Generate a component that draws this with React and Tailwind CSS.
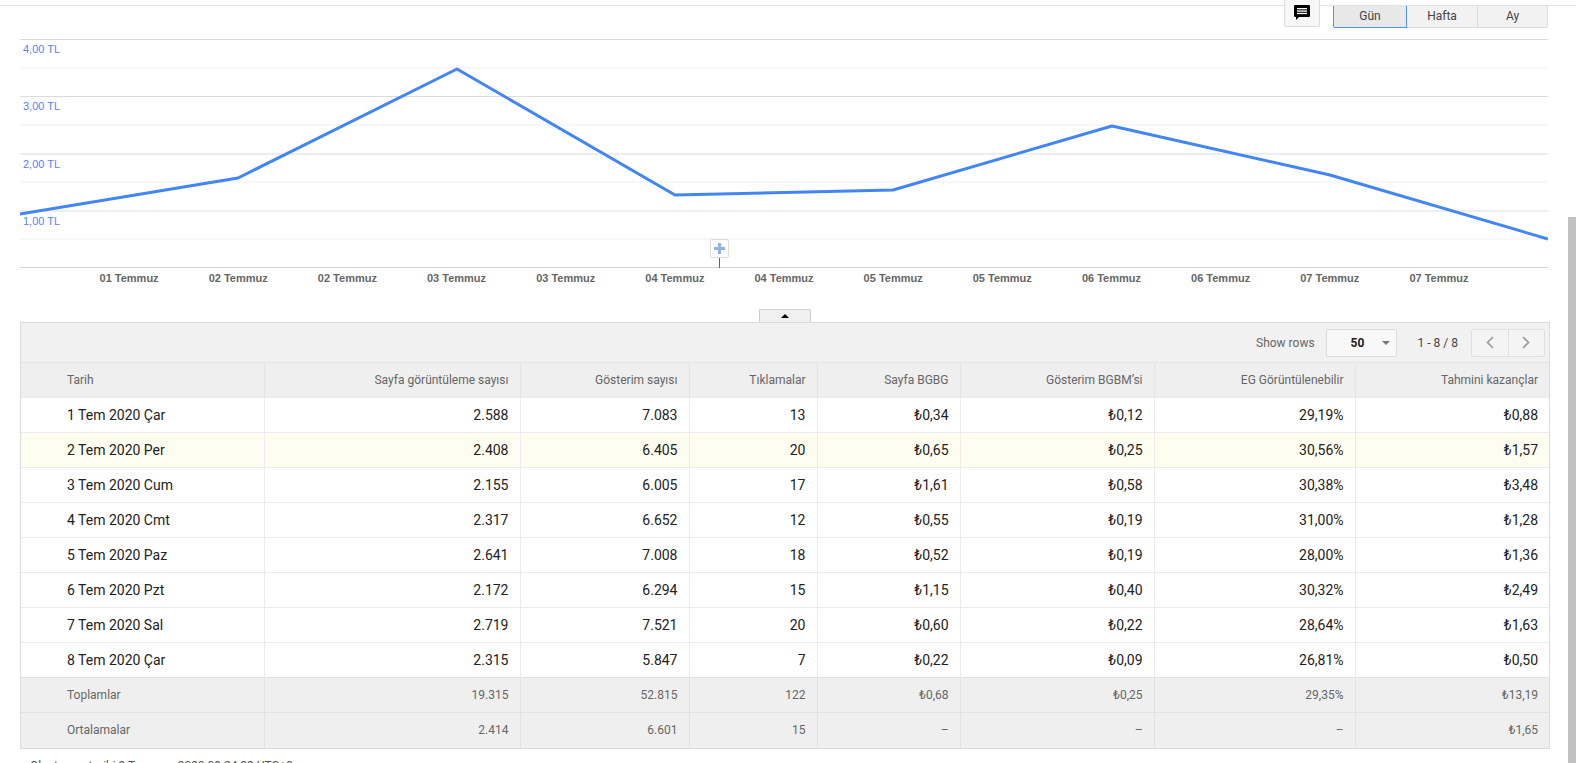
import React from 'react';

const points = [
  [0, 175], [218, 139], [437, 30], [655, 156], [873, 151], [1092, 87], [1310, 136], [1528, 200],
];

const xLabels = [
  '01 Temmuz', '02 Temmuz', '02 Temmuz', '03 Temmuz', '03 Temmuz', '04 Temmuz', '04 Temmuz',
  '05 Temmuz', '05 Temmuz', '06 Temmuz', '06 Temmuz', '07 Temmuz', '07 Temmuz',
];

const yLabels = [
  { t: '4,00 TL', top: 'top-[5px]' },
  { t: '3,00 TL', top: 'top-[62px]' },
  { t: '2,00 TL', top: 'top-[120px]' },
  { t: '1,00 TL', top: 'top-[177px]' },
];

const rows = [
  ['1 Tem 2020 Çar', '2.588', '7.083', '13', '₺0,34', '₺0,12', '29,19%', '₺0,88'],
  ['2 Tem 2020 Per', '2.408', '6.405', '20', '₺0,65', '₺0,25', '30,56%', '₺1,57'],
  ['3 Tem 2020 Cum', '2.155', '6.005', '17', '₺1,61', '₺0,58', '30,38%', '₺3,48'],
  ['4 Tem 2020 Cmt', '2.317', '6.652', '12', '₺0,55', '₺0,19', '31,00%', '₺1,28'],
  ['5 Tem 2020 Paz', '2.641', '7.008', '18', '₺0,52', '₺0,19', '28,00%', '₺1,36'],
  ['6 Tem 2020 Pzt', '2.172', '6.294', '15', '₺1,15', '₺0,40', '30,32%', '₺2,49'],
  ['7 Tem 2020 Sal', '2.719', '7.521', '20', '₺0,60', '₺0,22', '28,64%', '₺1,63'],
  ['8 Tem 2020 Çar', '2.315', '5.847', '7', '₺0,22', '₺0,09', '26,81%', '₺0,50'],
];

const totals = [
  ['Toplamlar', '19.315', '52.815', '122', '₺0,68', '₺0,25', '29,35%', '₺13,19'],
  ['Ortalamalar', '2.414', '6.601', '15', '–', '–', '–', '₺1,65'],
];

const headers = [
  'Tarih', 'Sayfa görüntüleme sayısı', 'Gösterim sayısı', 'Tıklamalar', 'Sayfa BGBG',
  'Gösterim BGBM\u2019si', 'EG Görüntülenebilir', 'Tahmini kazançlar',
];

const colWidths = ['w-[243px]', 'w-[256px]', 'w-[169px]', 'w-[128px]', 'w-[143px]', 'w-[194px]', 'w-[201px]', 'w-[194px]'];

const CommentIcon = () => (
  <svg width="16" height="16" viewBox="0 0 16 16">
    <path d="M1 0h14a1 1 0 0 1 1 1v10a1 1 0 0 1-1 1H5l-3 3v-3H1a1 1 0 0 1-1-1V1a1 1 0 0 1 1-1z" fill="#000" />
    <rect x="3" y="3" width="10" height="1.3" fill="#fff" />
    <rect x="3" y="5.4" width="10" height="1.3" fill="#fff" />
    <rect x="3" y="7.8" width="10" height="1.3" fill="#fff" />
  </svg>
);

function Chart() {
  const grid = [0.5, 29, 57.5, 86, 115, 143, 172, 200, 228.5];
  const major = [0.5, 57.5, 115, 172];
  return (
    <div className="relative ml-[20px] w-[1528px] h-[229px]">
      <svg width="1528" height="229" className="block">
        {grid.map((y) => (
          <line
            key={y}
            x1="0"
            x2="1528"
            y1={y}
            y2={y}
            stroke={y === 228.5 ? '#d6d6d6' : major.includes(y) ? '#dcdcdc' : '#efefef'}
            strokeWidth="1"
          />
        ))}
        <polyline
          points={points.map((p) => p.join(',')).join(' ')}
          fill="none"
          stroke="#4285f4"
          strokeWidth="3"
          strokeLinejoin="round"
        />
      </svg>
      {yLabels.map((l) => (
        <span
          key={l.t}
          className={`absolute left-[3px] ${l.top} text-[11px] leading-[11px] text-[#5b7ff4] font-['Liberation_Sans',Arial,sans-serif]`}
        >
          {l.t}
        </span>
      ))}
      {/* zoom handle */}
      <div className="absolute left-[690px] top-[200px] w-[19px] h-[19px] bg-white border border-[#dcdcdc] rounded-[2px] flex items-center justify-center">
        <svg width="11" height="11" viewBox="0 0 11 11">
          <rect x="4" y="0" width="3" height="11" fill="#8fb3e6" />
          <rect x="0" y="4" width="11" height="3" fill="#8fb3e6" />
        </svg>
      </div>
      <div className="absolute left-[699px] top-[219px] w-px h-[10px] bg-[#666]" />
    </div>
  );
}

function Toolbar() {
  return (
    <div className="h-[39px] bg-[#f1f1f1] flex items-center justify-end pr-[4px] text-[12px]">
      <span className="text-[#666]">Show rows</span>
      <div className="ml-[11px] w-[71px] h-[28px] border border-[#dcdcdc] bg-[#f8f8f8] rounded-[2px] flex items-center pl-[24px] pr-[6px]">
        <span className="font-bold text-[#222]">50</span>
        <span className="ml-auto w-0 h-0 border-l-[4px] border-r-[4px] border-t-[4px] border-l-transparent border-r-transparent border-t-[#777]" />
      </div>
      <span className="ml-[21px] text-[#444]">1 - 8 / 8</span>
      <div className="ml-[13px] w-[74px] h-[28px] border border-[#e0e0e0] bg-[#f4f4f4] rounded-[2px] flex">
        <div className="flex-1 flex items-center justify-center border-r border-[#e0e0e0]">
          <svg width="8" height="13" viewBox="0 0 8 13">
            <path d="M7 1L1.5 6.5 7 12" fill="none" stroke="#999" strokeWidth="1.6" />
          </svg>
        </div>
        <div className="flex-1 flex items-center justify-center">
          <svg width="8" height="13" viewBox="0 0 8 13">
            <path d="M1 1l5.5 5.5L1 12" fill="none" stroke="#999" strokeWidth="1.6" />
          </svg>
        </div>
      </div>
    </div>
  );
}

function DataTable() {
  return (
    <table className="w-full table-fixed border-collapse">
      <colgroup>
        {colWidths.map((w, i) => (
          <col key={i} className={w} />
        ))}
      </colgroup>
      <thead>
        <tr className="h-[35px] bg-[#efefef] border-t border-[#e4e4e4]">
          {headers.map((h, i) => (
            <th
              key={h}
              className={`font-normal text-[12px] text-[#666] border-l border-[#e4e4e4] first:border-l-0 ${
                i === 0 ? 'text-left pl-[46px]' : 'text-right pr-[11px]'
              }`}
            >
              {h}
            </th>
          ))}
        </tr>
      </thead>
      <tbody>
        {rows.map((r, ri) => (
          <tr key={ri} className={`h-[35px] border-t border-[#ececec] ${ri === 1 ? 'bg-[#fefef0]' : 'bg-white'}`}>
            {r.map((c, i) => (
              <td
                key={i}
                className={`text-[14px] text-[#222] border-l border-[#ececec] first:border-l-0 ${
                  i === 0 ? 'text-left pl-[46px]' : 'text-right pr-[11px]'
                }`}
              >
                {c}
              </td>
            ))}
          </tr>
        ))}
        {totals.map((r, ri) => (
          <tr key={ri} className="h-[35px] bg-[#efefef] border-t border-[#e2e2e2]">
            {r.map((c, i) => (
              <td
                key={i}
                className={`text-[12px] text-[#666] border-l border-[#e2e2e2] first:border-l-0 ${
                  i === 0 ? 'text-left pl-[46px]' : 'text-right pr-[11px]'
                }`}
              >
                {c}
              </td>
            ))}
          </tr>
        ))}
      </tbody>
    </table>
  );
}

export default function App() {
  return (
    <div className="relative w-[1576px] h-[763px] overflow-hidden bg-white font-['Roboto',sans-serif]">
      <div className="h-[5px]" />
      <div className="border-t border-[#e3e3e3] h-[34px] flex justify-end pr-[28px]">
        <button className="-mt-[6px] h-[27px] w-[36px] bg-[#f7f7f7] border border-t-0 border-[#dcdcdc] rounded-b-[2px] flex items-center justify-center">
          <CommentIcon />
        </button>
        <div className="ml-[13px] h-[22px] flex text-[12px] text-[#444]">
          <div className="w-[74px] bg-[#e8e8e8] border border-t-0 border-[#4d90fe] rounded-bl-[2px] flex items-center justify-center pb-[1px]">
            Gün
          </div>
          <div className="w-[70px] bg-[#f2f2f2] border-b border-[#dcdcdc] flex items-center justify-center pb-[1px]">
            Hafta
          </div>
          <div className="w-[71px] bg-[#f2f2f2] border-b border-l border-r border-[#dcdcdc] rounded-br-[2px] flex items-center justify-center pb-[1px]">
            Ay
          </div>
        </div>
      </div>

      <Chart />

      <div className="ml-[74.5px] w-[1419px] h-[19px] pt-[3px] grid grid-cols-13 text-[11px] leading-[14px] font-bold text-[#666] font-['Liberation_Sans',Arial,sans-serif]">
        {xLabels.map((l, i) => (
          <span key={i} className="text-center">
            {l}
          </span>
        ))}
      </div>

      <div className="ml-[20px] w-[1530px] mt-[22px]">
        <div className="mx-auto w-[52px] h-[13px] bg-[#f0f0f0] border border-b-0 border-[#cfcfcf] flex items-center justify-center">
          <span className="w-0 h-0 border-l-[4px] border-r-[4px] border-b-[4px] border-l-transparent border-r-transparent border-b-black" />
        </div>
        <div className="border border-[#dcdcdc]">
          <Toolbar />
          <DataTable />
        </div>
        <div className="mt-[9px] pl-[10px] text-[12px] leading-[16px] text-[#555]">
          Oluşturma tarihi 9 Temmuz 2020 09:24:33 UTC+3
        </div>
      </div>

      <div className="absolute right-0 top-[217px] w-[8px] h-[546px] bg-[#c1c1c1]" />
    </div>
  );
}
